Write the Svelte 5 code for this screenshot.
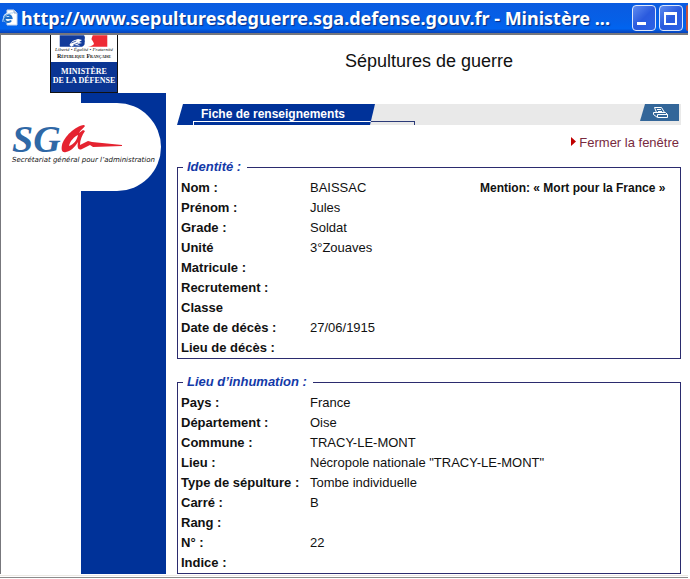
<script>
  const pageUrl = "http://www.sepulturesdeguerre.sga.defense.gouv.fr";

  const identite = [
    { label: "Nom :", value: "BAISSAC", mention: "Mention: « Mort pour la France »" },
    { label: "Prénom :", value: "Jules" },
    { label: "Grade :", value: "Soldat" },
    { label: "Unité", value: "3°Zouaves" },
    { label: "Matricule :", value: "" },
    { label: "Recrutement :", value: "" },
    { label: "Classe", value: "" },
    { label: "Date de décès :", value: "27/06/1915" },
    { label: "Lieu de décès :", value: "" },
  ];

  const inhumation = [
    { label: "Pays :", value: "France" },
    { label: "Département :", value: "Oise" },
    { label: "Commune :", value: "TRACY-LE-MONT" },
    { label: "Lieu :", value: 'Nécropole nationale "TRACY-LE-MONT"' },
    { label: "Type de sépulture :", value: "Tombe individuelle" },
    { label: "Carré :", value: "B" },
    { label: "Rang :", value: "" },
    { label: "N° :", value: "22" },
    { label: "Indice :", value: "" },
  ];

  const sections = [
    { title: "Identité :", rows: identite },
    { title: "Lieu d’inhumation :", rows: inhumation },
  ];
</script>

<div class="window">
  <header class="titlebar">
    <svg class="page-icon" width="16" height="18" viewBox="0 0 16 18">
      <path d="M5 1h7l3 3v12H5z" fill="#fff" stroke="#c9d6ea" />
      <path d="M12 1v3h3" fill="#d8e4f4" stroke="#8fa8cf" />
      <circle cx="6" cy="9" r="5" fill="#e4f0fc" />
      <path d="M9 11.500A3.500 3.500 0 1 1 9.500 9H3" fill="none" stroke="#1f6fc8" stroke-width="2" />
      <path d="M1 13C-1 9 7 3 11 4" fill="none" stroke="#a5cdf2" />
    </svg>
    <span class="caption">{pageUrl} - Ministère ...</span>
    <div class="window-buttons">
      <button aria-label="Réduire">
        <svg width="22" height="22" viewBox="0 0 22 22"><path d="M4 15h9v3H4z" fill="#fff" /></svg>
      </button>
      <button aria-label="Agrandir">
        <svg width="22" height="22" viewBox="0 0 22 22"><path d="M4 5h13v13H4zM6 8v8h9V8z" fill="#fff" fill-rule="evenodd" /></svg>
      </button>
      <button class="close" aria-label="Fermer"></button>
    </div>
  </header>

  <div class="page">
    <aside>
      <div class="ministry">
        <svg width="68" height="12" viewBox="0 0 68 12">
          <path d="M9 0h25c2 3 0 4 1 6-1 2 1 4-3 6H9z" fill="#123b9b" />
          <path d="M43 0h15v12H38c4-1 7-2 6-4-1-3-3-3-2-5z" fill="#ee2b35" />
          <path d="M19 10c3-5 6-5 9-6l4 1-3 2 3 1-5 1 3 2-6-1-3 2z" fill="#fff" />
          <path d="M21 8l5-2M23 10l5-2" stroke="#4866b0" fill="none" />
        </svg>
        <span class="motto">Liberté • Égalité • Fraternité</span>
        <span class="republic">République Française</span>
        <strong>Ministère<br />de la Défense</strong>
      </div>
      <div class="sga">
        <div class="sga-name">
          <span>SG</span>
          <svg width="62" height="28" viewBox="0 0 62 28">
            <path d="M23 0C14 1 3 12 1 20c-1 5 0 8 4 7 5-1 9-5 12-10-1 5 0 9 4 7l8-4 3 2 29-1v-1l-30-3-4-1-8 4c0-5 2-10 5-14l-2-1-4 3c1-3 5-5 6-7zM8 21c1-5 5-9 9-11-1 5-4 9-9 11z" fill="#e52330" fill-rule="evenodd" />
          </svg>
        </div>
        <span class="sga-label">Secrétariat général pour l’administration</span>
      </div>
    </aside>

    <main>
      <h1>Sépultures de guerre</h1>

      <div class="strip">
        <div class="tab"><h2>Fiche de renseignements</h2></div>
        <div class="tab-line"></div>
        <button class="print" aria-label="Imprimer">
          <svg width="18" height="13" viewBox="0 0 18 13" fill="none" stroke="#fff">
            <path d="M4.500 6.500l-2-5h7l3 5M5 3.500h4M6 5.500h4M1.500 6.500h12l2 2v3h-10l-4-3zM5.500 11V8.500h10" />
          </svg>
        </button>
      </div>

      <a class="close-link" href="#fermer">
        <svg width="5" height="9" viewBox="0 0 5 9"><path d="M0 0l5 4.500L0 9z" fill="#c00000" /></svg>
        Fermer la fenêtre
      </a>

      {#each sections as section}
        <fieldset>
          <legend>{section.title}</legend>
          <table>
            <tbody>
              {#each section.rows as row}
                <tr>
                  <th scope="row">{row.label}</th>
                  {#if row.mention}
                    <td class="value">{row.value}</td>
                    <td class="mention">{row.mention}</td>
                  {:else}
                    <td colspan="2">{row.value}</td>
                  {/if}
                </tr>
              {/each}
            </tbody>
          </table>
        </fieldset>
      {/each}
    </main>
  </div>
  <footer></footer>
</div>

<style>
  :global(body) {
    margin: 0;
    background: #fff;
  }

  .window {
    margin: 3px 2px 0 0;
    font-family: "Liberation Sans", Arial, sans-serif;
    font-size: 13px;
    line-height: 20px;
    color: #111;
  }

  .titlebar {
    display: flex;
    align-items: center;
    height: 30px;
    padding-left: 2px;
    background: linear-gradient(#0a5be0, #0560e8 60%, #0064f0 85%, #0842b8);
    border-bottom: 2px solid #77777c;
  }

  .page-icon {
    flex: none;
    margin-right: 3px;
  }

  .caption {
    flex: 1;
    white-space: nowrap;
    font-family: "Noto Sans", "Trebuchet MS", sans-serif;
    font-size: 18px;
    line-height: 28px;
    font-weight: bold;
    color: #fff;
    text-shadow: 1px 1px 1px #0a2f86;
  }

  .window-buttons {
    display: flex;
    flex: none;
    gap: 3px;
  }

  .window-buttons button {
    box-sizing: border-box;
    width: 24px;
    height: 26px;
    padding: 0;
    background: linear-gradient(135deg, #5f8cf0, #2a5ade 50%, #2b62e6);
    border: 1px solid #dfe8fb;
    border-radius: 4px;
  }

  .window-buttons svg {
    display: block;
  }

  .window-buttons .close {
    width: 2px;
    background: #c8523c;
    border: none;
    border-radius: 4px 0 0 4px;
  }

  .page {
    display: flex;
    border-left: 1px solid #77777c;
  }

  aside {
    flex: none;
    width: 165px;
    background: linear-gradient(90deg, #fff 80px, #003299 80px);
  }

  .ministry {
    display: flex;
    flex-direction: column;
    align-items: flex-start;
    height: 58px;
    padding-left: 49px;
    background: #fff;
    font-family: "Liberation Serif", "Times New Roman", serif;
    text-align: center;
    white-space: nowrap;
  }

  .ministry > * {
    box-sizing: border-box;
    width: 68px;
    border: solid #111;
    border-width: 0 1px;
  }

  .motto {
    font-size: 5px;
    line-height: 6px;
    font-style: italic;
  }

  .republic {
    height: 9px;
    font-size: 6px;
    line-height: 6px;
    font-variant: small-caps;
    font-weight: bold;
  }

  .ministry strong {
    height: 31px;
    padding-top: 5px;
    border-bottom-width: 1px;
    background: #0a3593;
    color: #fff;
    font-size: 8px;
    line-height: 9px;
    text-transform: uppercase;
  }

  .sga {
    box-sizing: border-box;
    width: 160px;
    height: 88px;
    margin-top: 10px;
    padding: 20px 0 0 11px;
    background: #fff;
    border-radius: 0 44px 44px 0;
  }

  .sga-name {
    display: flex;
    align-items: center;
    height: 32px;
    font-family: "Liberation Serif", "Times New Roman", serif;
    font-size: 38px;
    line-height: 32px;
    font-style: italic;
    font-weight: bold;
    color: #2f68a6;
  }

  .sga-label {
    display: block;
    white-space: nowrap;
    font-family: "DejaVu Sans", sans-serif;
    font-size: 7px;
    line-height: 10px;
    font-style: italic;
  }

  main {
    flex: 1;
    min-width: 0;
    padding: 0 7px 0 11px;
  }

  h1 {
    margin: 0;
    padding: 16px 0 33px;
    font-size: 18px;
    font-weight: normal;
    line-height: 20px;
    text-align: center;
  }

  .strip {
    display: flex;
    height: 21px;
    background: linear-gradient(90deg, #fff 20px, #e9e9e9 20px);
  }

  .tab {
    position: relative;
    width: 198px;
    background: #003299;
    clip-path: polygon(6px 0, 100% 0, 193px 100%, 0 100%);
  }

  .tab::after {
    content: "";
    position: absolute;
    left: 16px;
    right: 0;
    bottom: 0;
    height: 3px;
    border-top: 1px solid #fff;
    border-left: 1px solid #fff;
  }

  .tab h2 {
    margin: 0;
    padding-left: 24px;
    font-size: 12px;
    line-height: 20px;
    color: #fff;
    white-space: nowrap;
  }

  .tab-line {
    align-self: flex-end;
    width: 43px;
    height: 3px;
    margin-left: -4px;
    border: solid #2b3a78;
    border-width: 1px 1px 0 0;
  }

  .print {
    display: flex;
    align-items: center;
    justify-content: center;
    width: 39px;
    height: 17px;
    margin: 0 2px 0 auto;
    padding: 0 0 0 3px;
    background: #336699;
    border: none;
    clip-path: polygon(5px 0, 100% 0, 100% 100%, 0 100%);
  }

  .close-link {
    display: flex;
    align-items: flex-start;
    justify-content: flex-end;
    gap: 3px;
    padding: 8px 2px 4px 0;
    color: #782a3e;
    text-decoration: none;
  }

  .close-link svg {
    margin-top: 4px;
  }

  fieldset {
    min-width: 0;
    margin: 0 0 13px;
    padding: 1px 3px 0;
    border: 1px solid #2b2b6e;
  }

  fieldset:last-child {
    margin-bottom: 0;
  }

  legend {
    margin-left: 2px;
    padding: 0 6px 0 4px;
    font-style: italic;
    font-weight: bold;
    color: #1339a8;
  }

  table {
    width: 100%;
    border-collapse: collapse;
  }

  th,
  td {
    height: 20px;
    padding: 0;
    text-align: left;
  }

  th {
    width: 129px;
    white-space: nowrap;
  }

  .value {
    width: 170px;
  }

  .mention {
    font-size: 12px;
    font-weight: bold;
    white-space: nowrap;
  }

  footer {
    height: 1px;
    margin-top: 1px;
    border-top: 1px solid #ece9e4;
    border-bottom: 1px solid #8c8c8c;
  }
</style>
